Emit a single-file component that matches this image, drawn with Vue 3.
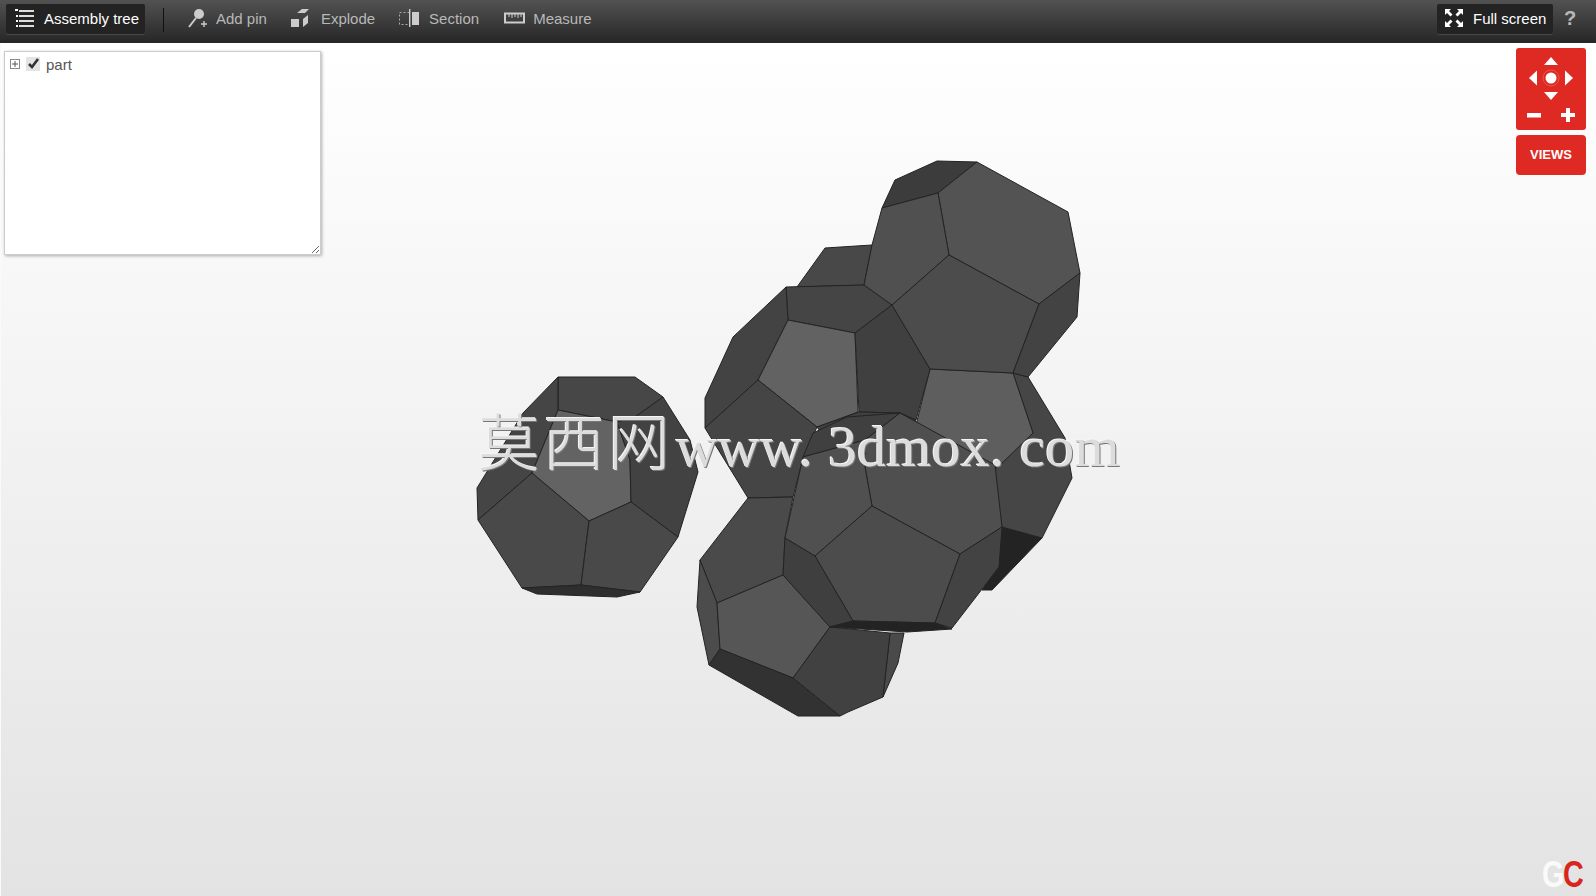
<script setup>
// faces are listed back to front, in page coordinates
const faces = [
  // blob on the left
  { c: '#474747', p: '558,377 635,377 663,397 635,417 617,422 558,410' },
  { c: '#454545', p: '558,377 558,410 532,473 478,520 477,488 523,413' },
  { c: '#636363', p: '558,410 617,422 630,460 631,502 589,521 532,473' },
  { c: '#424242', p: '663,397 690,440 698,472 678,537 631,502 630,460 617,422 635,417' },
  { c: '#494949', p: '532,473 589,521 581,585 522,588 478,520' },
  { c: '#494949', p: '631,502 678,537 640,592 581,585 589,521' },
  { c: '#2e2e2e', p: '522,588 581,585 640,592 617,597 537,594' },

  // right body, behind the front one
  { c: '#232323', p: '1002,527 1042,538 992,590 982,590 998,567' },
  { c: '#464646', p: '1013,373 1028,377 1065,438 1072,478 1042,538 1002,527 990,470 1033,433' },
  { c: '#5e5e5e', p: '930,369 1013,373 1033,433 997,468 916,425' },

  // middle left body
  { c: '#484848', p: '825,248 872,245 864,285 797,287' },
  { c: '#454545', p: '786,287 864,285 892,305 855,333 788,320' },
  { c: '#434343', p: '786,287 788,320 758,380 705,428 705,398 733,337' },
  { c: '#626262', p: '788,320 855,333 858,412 817,427 758,380' },
  { c: '#404040', p: '855,333 892,305 930,369 916,420 900,413 859,412' },
  { c: '#454545', p: '705,428 758,380 817,427 803,458 793,497 748,498' },

  // top body
  { c: '#3c3c3c', p: '882,208 895,180 937,161 977,162 938,193' },
  { c: '#535353', p: '977,162 1068,212 1080,273 1039,304 949,255 938,193' },
  { c: '#505050', p: '882,208 938,193 949,255 892,305 864,285 872,245' },
  { c: '#4c4c4c', p: '949,255 1039,304 1013,373 930,369 892,305' },
  { c: '#434343', p: '1080,273 1077,317 1028,377 1013,373 1039,304' },

  // bottom body
  { c: '#4a4a4a', p: '748,498 793,497 785,538 783,575 717,603 700,560' },
  { c: '#4c4c4c', p: '700,560 717,603 720,649 709,665 697,607' },
  { c: '#565656', p: '783,575 830,627 793,678 720,649 717,603' },
  { c: '#323232', p: '720,649 793,678 840,716 798,716 709,665' },
  { c: '#4a4a4a', p: '890,633 904,633 898,663 883,697' },
  { c: '#414141', p: '830,627 890,633 883,697 848,712 840,716 793,678' },

  // front body
  { c: '#404040', p: '817,427 859,412 900,413 916,420 900,432 830,445' },
  { c: '#404040', p: '803,457 813,433 847,417 900,413 865,440' },
  { c: '#4f4f4f', p: '900,413 995,465 1002,527 960,554 872,506 865,467 865,440' },
  { c: '#505050', p: '803,457 865,440 865,467 872,506 815,556 785,538' },
  { c: '#4c4c4c', p: '872,506 960,554 935,623 853,621 815,556' },
  { c: '#434343', p: '960,554 1002,527 999,567 952,628 935,623' },
  { c: '#3f3f3f', p: '785,538 815,556 853,621 830,627 783,575' },
  { c: '#232323', p: '830,627 853,621 935,623 952,629 907,632' },
]

const tools = [
  { label: 'Add pin', icon: 'pin' },
  { label: 'Explode', icon: 'explode' },
  { label: 'Section', icon: 'section' },
  { label: 'Measure', icon: 'measure' },
]
</script>

<template>
  <div class="viewer">
    <header class="toolbar">
      <button class="tool active tree-btn">
        <svg class="icon" width="22" height="20" viewBox="0 0 22 20">
          <g fill="#fff">
            <rect x="1" y="1" width="3" height="2" />
            <rect x="5" y="2" width="15" height="2" opacity=".85" />
            <rect x="2" y="7" width="2" height="2" />
            <rect x="5" y="7" width="15" height="2" opacity=".85" />
            <rect x="2" y="12" width="2" height="2" />
            <rect x="5" y="12" width="15" height="2" opacity=".85" />
            <rect x="2" y="17" width="2" height="2" />
            <rect x="5" y="17" width="15" height="2" opacity=".85" />
          </g>
        </svg>
        Assembly tree
      </button>
      <span class="sep"></span>
      <button v-for="t in tools" :key="t.label" class="tool" :class="t.icon">
        <svg v-if="t.icon === 'pin'" class="icon" width="20" height="20" viewBox="0 0 20 20">
          <circle cx="11" cy="6" r="5" fill="#ccc" />
          <path d="M8 10 L1 19" stroke="#ccc" stroke-width="2" fill="none" />
          <path d="M16 13v6M13 16h6" stroke="#ccc" stroke-width="1.4" fill="none" />
        </svg>
        <svg v-else-if="t.icon === 'explode'" class="icon" width="21" height="20" viewBox="0 0 21 20">
          <path d="M7 5 L12 1 L19 1 L15 5 Z" fill="#ccc" />
          <rect x="1" y="11" width="8" height="8" fill="#ccc" />
          <path d="M13 11 L18 7 L18 15 L13 19 Z" fill="#ccc" />
        </svg>
        <svg v-else-if="t.icon === 'section'" class="icon" width="22" height="20" viewBox="0 0 22 20">
          <rect x="1.5" y="4.5" width="10" height="12" fill="none" stroke="#aaa" stroke-dasharray="2 2" />
          <rect x="11" y="1" width="1.4" height="18" fill="#ccc" />
          <rect x="14" y="4" width="7" height="13" fill="#ccc" />
        </svg>
        <svg v-else class="icon" width="21" height="20" viewBox="0 0 21 20">
          <rect x="1" y="5.5" width="19" height="9" fill="none" stroke="#ccc" stroke-width="2" />
          <path d="M5 6v3M8 6v4M11 6v3M14 6v4M17 6v3" stroke="#ccc" fill="none" />
        </svg>
        {{ t.label }}
      </button>
      <span class="spacer"></span>
      <button class="tool active full-btn">
        <svg class="icon" width="20" height="20" viewBox="0 0 20 20">
          <g fill="#fff">
            <path d="M1 1h6L5 3l3.5 3.5-2 2L3 5 1 7z" />
            <path d="M19 1v6l-2-2-3.5 3.5-2-2L15 3l-2-2z" />
            <path d="M1 19v-6l2 2 3.5-3.5 2 2L5 17l2 2z" />
            <path d="M19 19h-6l2-2-3.5-3.5 2-2L17 15l2-2z" />
          </g>
        </svg>
        Full screen
      </button>
      <span class="help">?</span>
    </header>

    <main class="stage">
      <svg class="model" viewBox="0 43 1596 853" width="1596" height="853">
        <polygon
          v-for="(f, i) in faces"
          :key="i"
          :points="f.p"
          :fill="f.c"
          stroke="#232323"
          stroke-width="1"
          stroke-linejoin="round"
        />
      </svg>

      <div class="watermark"><span class="wm-cjk">莫西网</span>www. 3dmox. com</div>

      <aside class="tree-panel">
        <div class="tree-row">
          <svg width="10" height="10" viewBox="0 0 10 10">
            <rect x=".5" y=".5" width="9" height="9" fill="#fff" stroke="#888" />
            <path d="M2 5h6M5 2v6" stroke="#555" fill="none" />
          </svg>
          <svg width="14" height="14" viewBox="0 0 14 14">
            <rect width="14" height="14" fill="#e4e4e4" />
            <path d="M3 7l3 3 6-8" stroke="#333" stroke-width="2.6" fill="none" />
          </svg>
          <span class="part">part</span>
        </div>
        <svg class="grip" width="9" height="9" viewBox="0 0 9 9">
          <path d="M1 8 L8 1 M5 8 L8 5" stroke="#666" fill="none" />
        </svg>
      </aside>

      <div class="nav">
        <div class="nav-pad">
          <svg width="70" height="82" viewBox="0 0 70 82">
            <g fill="#fff">
              <path d="M35 9 L42 17 H28 Z" />
              <path d="M35 52 L42 44 H28 Z" />
              <path d="M21 22.5 V37.5 L13 30 Z" />
              <path d="M49 22.5 V37.5 L57 30 Z" />
              <circle cx="35" cy="30" r="5.5" />
              <rect x="11" y="65" width="14" height="4.5" />
              <path d="M45 65 H50 V60 H54 V65 H59 V69 H54 V74 H50 V69 H45 Z" />
            </g>
            <circle cx="35" cy="30" r="8" fill="none" stroke="#fff" stroke-opacity=".2" />
          </svg>
        </div>
        <button class="views">VIEWS</button>
      </div>

      <div class="logo"><span class="g">G</span><span class="c">C</span></div>
    </main>
  </div>
</template>

<style>
html, body { margin: 0; height: 100%; overflow: hidden; }
</style>

<style scoped>
.viewer {
  width: 1596px;
  height: 896px;
  display: flex;
  flex-direction: column;
  font-family: "Liberation Sans", Arial, sans-serif;
  font-size: 15px;
}

.toolbar {
  height: 43px;
  flex: none;
  box-sizing: border-box;
  display: flex;
  align-items: flex-start;
  padding: 4px 0 0 6px;
  background: linear-gradient(#525252, #262626);
}
.tool {
  height: 30px;
  box-sizing: border-box;
  padding: 0 0 2px;
  border: 0;
  background: none;
  display: flex;
  align-items: center;
  font: inherit;
  color: #b8b8b8;
  white-space: nowrap;
}
.tool .icon { flex: none; }
.tool.active {
  color: #fff;
  background: #232323;
  border-radius: 2px;
  box-shadow: 0 1px 0 rgba(255, 255, 255, .12);
}
.tree-btn { width: 139px; padding-left: 8px; gap: 8px; }
.sep {
  width: 1px;
  height: 24px;
  margin: 4px 0 0 18px;
  background: #111;
}
.pin { margin-left: 24px; gap: 8px; }
.explode { margin-left: 23px; gap: 10px; }
.section { margin-left: 23px; gap: 9px; }
.measure { margin-left: 25px; gap: 8px; }
.spacer { flex: 1; }
.full-btn { width: 116px; padding-left: 7px; gap: 9px; }
.help {
  width: 34px;
  margin-right: 9px;
  height: 30px;
  text-align: center;
  line-height: 28px;
  font-size: 20px;
  font-weight: 700;
  color: #b8b8b8;
}

.stage {
  position: relative;
  flex: 1;
  overflow: hidden;
  border-left: 1px solid #fafafa;
  background: linear-gradient(#ffffff, #e3e3e3);
}
.model {
  position: absolute;
  left: -1px;
  top: 0;
}

.watermark {
  position: absolute;
  left: 477px;
  top: 361px;
  font-family: "Liberation Serif", "Noto Sans CJK SC", serif;
  font-size: 58px;
  line-height: 70px;
  letter-spacing: .2px;
  white-space: nowrap;
  color: #dcdcdc;
  text-shadow: 1px 1px 0 #777, -1px -1px 0 #f5f5f5;
}
.wm-cjk {
  font-family: "Noto Sans CJK SC", serif;
  font-weight: 300;
  font-size: 62px;
  letter-spacing: 3px;
  margin-right: 3px;
}

.tree-panel {
  position: absolute;
  left: 3px;
  top: 8px;
  width: 317px;
  height: 204px;
  box-sizing: border-box;
  background: #fff;
  border: 1px solid #ccc;
  box-shadow: 1px 1px 3px rgba(0, 0, 0, .3);
}
.tree-row {
  display: flex;
  align-items: center;
  height: 16px;
  margin: 4px 0 0 5px;
  gap: 6px;
}
.part { color: #555; }
.grip {
  position: absolute;
  right: 0;
  bottom: 0;
}

.nav {
  position: absolute;
  left: 1515px;
  top: 5px;
  width: 70px;
  display: flex;
  flex-direction: column;
  gap: 5px;
}
.nav-pad {
  height: 82px;
  background: #de2a22;
  border-radius: 3px;
}
.nav-pad svg { display: block; }
.views {
  height: 40px;
  padding: 0 0 2px;
  border: 0;
  background: #de2a22;
  border-radius: 4px;
  color: #fff;
  font: 700 13px "Liberation Sans", Arial, sans-serif;
}

.logo {
  position: absolute;
  left: 1541px;
  top: 817px;
  display: flex;
  font-size: 36px;
  line-height: 30px;
  font-weight: 700;
}
.logo span {
  display: block;
  width: 21px;
  transform: scaleX(.8);
  transform-origin: left center;
}
.g { color: #fafafa; }
.c { color: #d8261e; }
</style>
